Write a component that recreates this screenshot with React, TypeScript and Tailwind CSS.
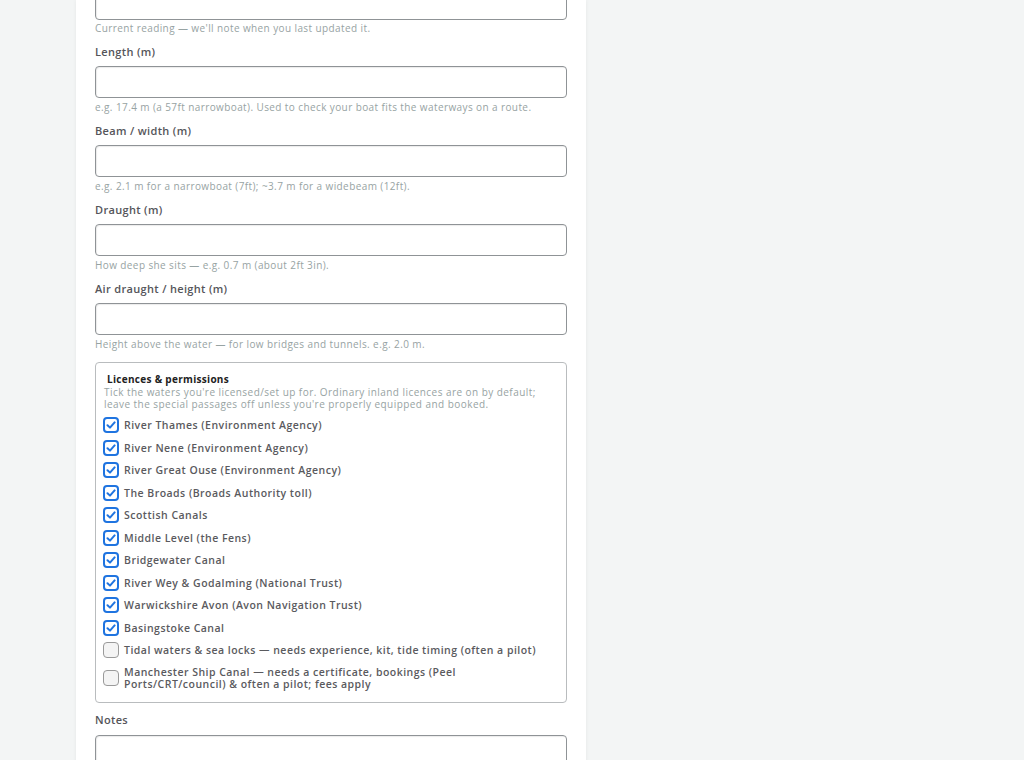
import React from "react";

const fields = [
  { label: "Length (m)", help: "e.g. 17.4 m (a 57ft narrowboat). Used to check your boat fits the waterways on a route." },
  { label: "Beam / width (m)", help: "e.g. 2.1 m for a narrowboat (7ft); ~3.7 m for a widebeam (12ft)." },
  { label: "Draught (m)", help: "How deep she sits — e.g. 0.7 m (about 2ft 3in)." },
  { label: "Air draught / height (m)", help: "Height above the water — for low bridges and tunnels. e.g. 2.0 m." },
];

const licences: { label: string; checked: boolean }[] = [
  { label: "River Thames (Environment Agency)", checked: true },
  { label: "River Nene (Environment Agency)", checked: true },
  { label: "River Great Ouse (Environment Agency)", checked: true },
  { label: "The Broads (Broads Authority toll)", checked: true },
  { label: "Scottish Canals", checked: true },
  { label: "Middle Level (the Fens)", checked: true },
  { label: "Bridgewater Canal", checked: true },
  { label: "River Wey & Godalming (National Trust)", checked: true },
  { label: "Warwickshire Avon (Avon Navigation Trust)", checked: true },
  { label: "Basingstoke Canal", checked: true },
  { label: "Tidal waters & sea locks — needs experience, kit, tide timing (often a pilot)", checked: false },
  { label: "Manchester Ship Canal — needs a certificate, bookings (Peel Ports/CRT/council) & often a pilot; fees apply", checked: false },
];

function Input() {
  return <div className="h-[32px] w-full shrink-0 rounded-[4px] border border-[#8f9396] bg-white shadow-[inset_1px_1px_1px_rgba(0,0,0,0.08)]" />;
}

function Check({ checked }: { checked: boolean }) {
  if (checked) {
    return (
      <span className="flex h-[16px] w-[16px] shrink-0 items-center justify-center rounded-[4px] border-2 border-[#1f74e0] bg-white">
        <svg width="10" height="10" viewBox="0 0 10 10">
          <path d="M1.5 5.2 L4 7.6 L8.6 2.4" fill="none" stroke="#1f74e0" strokeWidth="2" strokeLinecap="round" strokeLinejoin="round" />
        </svg>
      </span>
    );
  }
  return <span className="block h-[16px] w-[16px] shrink-0 rounded-[4px] border border-[#9a9a9a] bg-[#f4f4f4]" />;
}

const labelCls = "text-[11px] font-semibold leading-[14px] tracking-[0.03em] text-[#55555a]";
const helpCls = "text-[10px] leading-[13px] tracking-[0.04em] text-[#97a3a3]";

export default function App() {
  return (
    <div className="h-[760px] overflow-hidden bg-[#f3f5f5]" style={{ fontFamily: "'Open Sans', 'Noto Sans', sans-serif" }}>
      <div className="ml-[76px] flex min-h-[800px] w-[510px] flex-col bg-white px-[19px] shadow-[0_0_4px_rgba(0,0,0,0.06)]">
        <div className="-mt-[12px]">
          <Input />
        </div>
        <p className={`mt-[2px] ${helpCls}`}>Current reading — we'll note when you last updated it.</p>
        {fields.map((f) => (
          <div key={f.label} className="flex flex-col">
            <div className={`mt-[10px] ${labelCls}`}>{f.label}</div>
            <div className="mt-[7px]"><Input /></div>
            <p className={`mt-[3px] ${helpCls}`}>{f.help}</p>
          </div>
        ))}
        <div className="mt-[11px] rounded-[4px] border border-[#b9bcbe] pb-[12px] pl-[7px] pr-[10px] pt-[10px]">
          <div className="pl-[4px] text-[10px] font-bold leading-[13px] tracking-[0.03em] text-[#222]">Licences &amp; permissions</div>
          <p className="pl-[1px] pr-[10px] text-[10px] leading-[12px] tracking-[0.045em] text-[#97a3a3]">Tick the waters you're licensed/set up for. Ordinary inland licences are on by default; leave the special passages off unless you're properly equipped and booked.</p>
          <div className="mt-[7px] flex flex-col gap-[6.5px]">
            {licences.map((l, i) => (
              <label key={l.label} className={`flex items-center gap-[5px] ${i === licences.length - 1 ? "mt-[1px]" : ""}`}>
                <Check checked={l.checked} />
                <span className="max-w-[428px] text-[10.5px] font-semibold leading-[12px] tracking-[0.045em] text-[#5a5a5e]">{l.label}</span>
              </label>
            ))}
          </div>
        </div>
        <div className={`mt-[10px] ${labelCls}`}>Notes</div>
        <div className="mt-[8px]"><Input /></div>
      </div>
    </div>
  );
}
